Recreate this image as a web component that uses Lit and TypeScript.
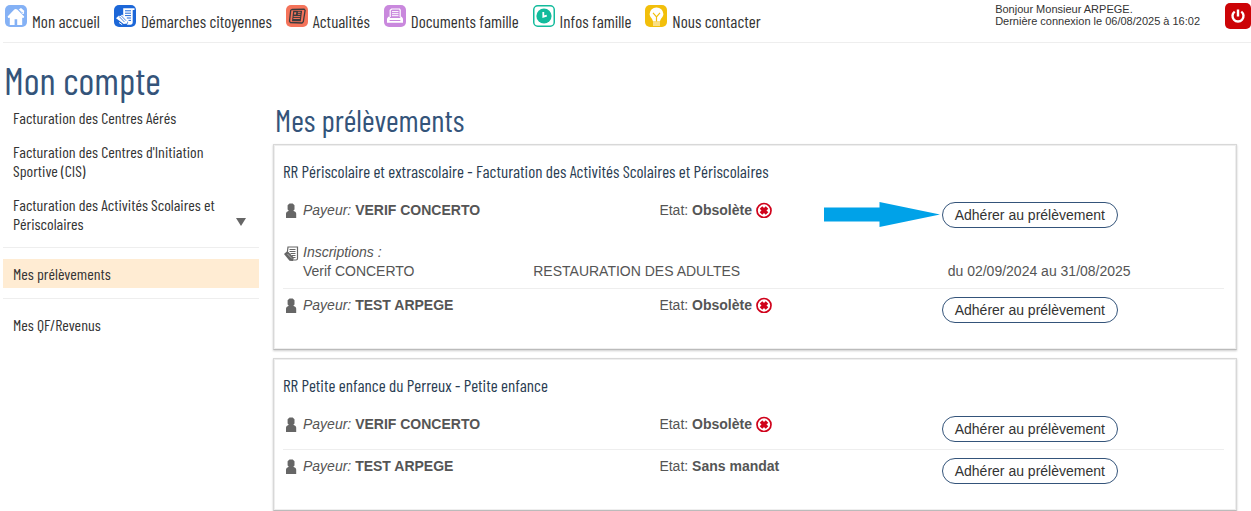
import { LitElement, html, css, svg, nothing, type TemplateResult } from "lit";
import { customElement, property } from "lit/decorators.js";

interface Payer {
  name: string;
  state: string;
  obsolete?: boolean;
  highlighted?: boolean;
  enrolments?: { who: string; activity: string; period: string }[];
}
interface Account {
  title: string;
  payers: Payer[];
}

const condensed = css`"Barlow Condensed", "Liberation Sans Narrow", "Roboto Condensed", "Liberation Sans", sans-serif`;

const navIcons: Record<string, TemplateResult> = {
  home: svg`<rect width="22" height="22" rx="5" fill="#84b1f5"/>
    <path d="M2.600 11.600 9.300 4.600l1.300-.6 1.600.6 7 7-.7 1.300-1.300-.2V20h-5v-5.800H9.600V20H4.800v-7.300l-1.500.2z" fill="#fff"/>
    <path d="M13.700 4.600l2.300-1.700 3.200 2.800-.4 3.200-1.400.2z" fill="#fff"/>
    <path d="M14 4.600l1.700 2.300 2.400 1.100" fill="none" stroke="#84b1f5" stroke-width=".7"/>`,
  forms: svg`<rect width="22" height="22" rx="5" fill="#1c67d8"/>
    <path d="M9.200 3.200h11.300v1.900h-1.800v12.200c0 1.500-.8 2.400-2.200 2.400h-3.700l1.500-2.100-5.100-6.200z" fill="#fff"/>
    <path d="M11 5.800h6M11 8.200h6M11 10.600h6M12.800 13h4.200M14.500 15.400h2.500" stroke="#1c67d8" stroke-width="1"/>
    <path d="M2 13.200l2.600-2.500 1.800.3 1.700-1.600 5.500 6.100-.3 3-3.600.5z" fill="#fff"/>
    <path d="M5.200 11.500l5.300 5.600M7.200 10.700l4.800 5" stroke="#1c67d8" stroke-width=".8"/>
    <path d="M5 17.500l3.200 2.200" stroke="#fff" stroke-width="1"/>`,
  news: svg`<rect width="22" height="22" rx="5" fill="#f4735a"/>
    <path d="M6.200 4.500l11.900-.4 1 1.300-1.800 11.400-1.300 1.200-11.600-.5-.9-1.400 1.200-10.800z" fill="none" stroke="#3b3b3d" stroke-width="1.300"/>
    <path d="M7.200 5.700h8.900l-1.300 10.600H6z" fill="#3b3b3d"/>
    <path d="M11.900 7.300h2.700M11.800 9.300h2.600M7.600 11.600h6.600M7.300 13.500h6.600" stroke="#f4735a" stroke-width="1"/>
    <path d="M8.300 7.200h2l-.3 2.400H8z" fill="#f4735a"/>`,
  printer: svg`<rect width="22" height="22" rx="5" fill="#c988dd"/>
    <path d="M6.200 12V5.200L7.600 4h8l.6 1.200V12" fill="none" stroke="#fff" stroke-width="1.200"/>
    <path d="M8 6.600h6.500M8 8.700h6.500M8 10.700h6.500" stroke="#fff" stroke-width="1"/>
    <path d="M4.200 11.800h1.400l.6 1.200h9.800l.6-1.200h1.200l1.200 2v4H3v-4z" fill="#fff"/>
    <path d="M5.600 15.500h10.800" stroke="#c988dd" stroke-width="1"/>`,
  clock: svg`<rect x=".75" y=".75" width="20.500" height="20.500" rx="4" fill="#fff" stroke="#12bb9c" stroke-width="1.500"/>
    <circle cx="11" cy="11" r="7.600" fill="#12bb9c"/>
    <path d="M10.300 7v4.700l3.500-1" fill="none" stroke="#fff" stroke-width="1.800"/>`,
  bulb: svg`<rect width="22" height="22" rx="5" fill="#f2bf0b"/>
    <path d="M11.500 2.500a6.700 6.700 0 0 0-6.900 6.400c0 3 3 4.400 3.400 7.600h7c.4-3.200 3.400-4.600 3.400-7.600a6.700 6.700 0 0 0-6.900-6.400z" fill="#fff"/>
    <path d="M8 7.800l3.500 4 3.500-4M11.500 11.800v4.700" fill="none" stroke="#f2bf0b" stroke-width="1.200"/>
    <path d="M8 18h7M8 20h7" stroke="#fff" stroke-width="1.100"/>`,
};

const navItems = [
  ["home", "Mon accueil"],
  ["forms", "Démarches citoyennes"],
  ["news", "Actualités"],
  ["printer", "Documents famille"],
  ["clock", "Infos famille"],
  ["bulb", "Nous contacter"],
];

const accounts: Account[] = [
  {
    title: "RR Périscolaire et extrascolaire - Facturation des Activités Scolaires et Périscolaires",
    payers: [
      {
        name: "VERIF CONCERTO",
        state: "Obsolète",
        obsolete: true,
        highlighted: true,
        enrolments: [
          { who: "Verif CONCERTO", activity: "RESTAURATION DES ADULTES", period: "du 02/09/2024 au 31/08/2025" },
        ],
      },
      { name: "TEST ARPEGE", state: "Obsolète", obsolete: true },
    ],
  },
  {
    title: "RR Petite enfance du Perreux - Petite enfance",
    payers: [
      { name: "VERIF CONCERTO", state: "Obsolète", obsolete: true },
      { name: "TEST ARPEGE", state: "Sans mandat" },
    ],
  },
];

@customElement("top-bar")
class TopBar extends LitElement {
  static styles = css`
    :host { display: block; }
    .bar {
      display: flex;
      justify-content: space-between;
      height: 42px;
      margin-left: 3px;
      border-bottom: 1px solid #eee;
    }
    .nav { display: flex; gap: 14px; padding: 5px 0 0 2px; }
    .link {
      display: flex;
      gap: 5px;
      color: #333;
      text-decoration: none;
      font: 17px/32px ${condensed};
      white-space: nowrap;
    }
    .icon { flex: none; width: 22px; height: 22px; }
    .session { display: flex; gap: 25px; padding-top: 3px; }
    .who { margin: 0; font: 11px/12px "Liberation Sans", Arial, sans-serif; color: #333; white-space: nowrap; }
    .power {
      display: block;
      width: 26px;
      height: 26px;
      padding: 0;
      border: 0;
      border-radius: 5px;
      background: #cc0407;
    }
    .power svg { display: block; }
  `;
  render() {
    return html`
      <header class="bar">
        <nav class="nav">
          ${navItems.map(
            ([icon, label]) => html`<a class="link" href="#"
              ><svg class="icon" viewBox="0 0 22 22" aria-hidden="true">${navIcons[icon]}</svg>${label}</a
            >`
          )}
        </nav>
        <div class="session">
          <p class="who">Bonjour Monsieur ARPEGE.<br />Dernière connexion le 06/08/2025 à 16:02</p>
          <button class="power" aria-label="Déconnexion">
            <svg width="26" height="26" viewBox="0 0 26 26" fill="none" stroke="#fff" stroke-width="2.400">
              <path d="M9.700 8.600a5.500 5.500 0 1 0 6.600 0M13 6.500v7" />
            </svg>
          </button>
        </div>
      </header>
    `;
  }
}

@customElement("account-menu")
class AccountMenu extends LitElement {
  static styles = css`
    :host { display: block; }
    .menu { display: flex; flex-direction: column; gap: 5px; font: 16px/19px ${condensed}; }
    .item { display: flex; align-items: flex-end; padding: 5px 10px; color: #333; text-decoration: none; }
    .label { flex: 1; }
    .caret { flex: none; width: 10px; height: 8px; margin: 0 3px 7px 0; }
    .current { margin-bottom: 1px; background: #ffecd3; }
    .rule { width: 100%; margin: 4px 0 6px; border: 0; border-top: 1px solid #eee; }
  `;
  render() {
    return html`
      <nav class="menu">
        <a class="item" href="#">Facturation des Centres Aérés</a>
        <a class="item" href="#">Facturation des Centres d'Initiation<br />Sportive (CIS)</a>
        <a class="item" href="#">
          <span class="label">Facturation des Activités Scolaires et<br />Périscolaires</span>
          <svg class="caret" viewBox="0 0 10 8"><path d="M0 0h10L5 8z" fill="#666" /></svg>
        </a>
        <hr class="rule" />
        <a class="item current" href="#" aria-current="page">Mes prélèvements</a>
        <hr class="rule" />
        <a class="item" href="#">Mes QF/Revenus</a>
      </nav>
    `;
  }
}

@customElement("account-card")
class AccountCard extends LitElement {
  @property({ attribute: false }) account!: Account;

  static styles = css`
    :host { display: block; }
    .card {
      padding: 16px 12px 19px 9px;
      border: 1px solid #d8d8d8;
      border-bottom-color: #bbb;
      box-shadow: inset 0 0 0 1px #eee, 0 1px 2px rgba(0, 0, 0, 0.2);
      color: #555;
      font: 14px/16px "Liberation Sans", Arial, sans-serif;
    }
    .title { margin: 0 0 13px; color: #2a3d52; font: 17px/20px ${condensed}; }
    .payer + .payer { border-top: 1px solid #eee; }
    .row { display: grid; grid-template-columns: 40% 30% 30%; padding: 8px 0 7px; }
    .name, .state { display: flex; gap: 4px; }
    .glyph { flex: none; width: 16px; height: 16px; }
    .lead { font-style: italic; }
    .value { font-weight: bold; }
    .action { position: relative; }
    .arrow { position: absolute; right: 100%; top: 0; width: 116px; height: 25px; margin-right: 2px; }
    .join {
      height: 26px;
      padding: 0 12px;
      border: 1px solid #34547a;
      border-radius: 13px;
      background: #fff;
      color: #333;
      font: 14px/24px "Liberation Sans", Arial, sans-serif;
      white-space: nowrap;
    }
    .enrolments { display: flex; gap: 4px; padding: 8px 0 7px; line-height: 19px; }
    .detail { flex: 1; }
    .line { display: grid; grid-template-columns: 25% 45% 30%; }
    .sheet { margin-top: 3px; }
  `;
  render() {
    return html`
      <section class="card">
        <h3 class="title">${this.account.title}</h3>
        ${this.account.payers.map((p) => this.payer(p))}
      </section>
    `;
  }
  private payer(p: Payer) {
    return html`
      <div class="payer">
        <div class="row">
          <div class="name">
            <svg class="glyph" viewBox="0 0 16 16" fill="#666">
              <path d="M6.500 1.600h3.200l1.800 1.600v4.200l-1.200 1.400 2.300 1.200.6 1.400V16H3v-4.600l.6-1.400 2.200-1.200-1.200-1.400V3.200z" />
            </svg>
            <span><span class="lead">Payeur:</span> <span class="value">${p.name}</span></span>
          </div>
          <div class="state">
            <span>Etat: <span class="value">${p.state}</span></span>
            ${p.obsolete
              ? html`<svg class="glyph" viewBox="0 0 16 16">
                  <circle cx="8" cy="8.500" r="7" fill="#fff" stroke="#d0021b" stroke-width="1.700" />
                  <path d="M5 5.500l6 6M11 5.500l-6 6" stroke="#d0021b" stroke-width="3.600" />
                </svg>`
              : nothing}
          </div>
          <div class="action">
            ${p.highlighted
              ? html`<svg class="arrow" viewBox="0 0 116 25"><path d="M0 5.500h55.500V0L116 12.500 55.500 25v-5.500H0z" fill="#00a2e8" /></svg>`
              : nothing}
            <button class="join">Adhérer au prélèvement</button>
          </div>
        </div>
        ${p.enrolments
          ? html`<div class="enrolments">
              <svg class="glyph sheet" viewBox="0 0 16 16">
                <path d="M5 1h9.500v11.500c0 1-.6 1.500-1.500 1.500H8L4 9z" fill="#fff" stroke="#666" stroke-width="1.200" />
                <path d="M6.500 3.500h6M6.500 5.500h6M7.500 7.500h5M9 9.500h3.500M10 11.500h2.500" stroke="#666" />
                <path d="M1 8l2.500-2.200 2 .2 5.300 5.500-.8 3.500-3.500-.2z" fill="#666" />
                <path d="M4.500 8l4.500 4.600" stroke="#ccc" stroke-width=".7" />
              </svg>
              <div class="detail">
                <div class="lead">Inscriptions :</div>
                ${p.enrolments.map(
                  (e) => html`<div class="line"><span>${e.who}</span><span>${e.activity}</span><span>${e.period}</span></div>`
                )}
              </div>
            </div>`
          : nothing}
      </div>
    `;
  }
}

@customElement("app-root")
class AppRoot extends LitElement {
  static styles = css`
    :host { display: block; background: #fff; }
    .heading { margin: 0; padding: 15px 4px 1px; color: #34547a; font: 38px/44px ${condensed}; }
    .columns { display: grid; grid-template-columns: 256px 1fr; gap: 14px; padding: 0 14px 0 3px; }
    .subheading { margin: 0; padding: 0 2px 8px; color: #34547a; font: 31px/33px ${condensed}; }
    .cards { display: flex; flex-direction: column; gap: 8px; }
  `;
  render() {
    return html`
      <top-bar></top-bar>
      <h1 class="heading">Mon compte</h1>
      <div class="columns">
        <account-menu></account-menu>
        <main>
          <h2 class="subheading">Mes prélèvements</h2>
          <div class="cards">${accounts.map((a) => html`<account-card .account=${a}></account-card>`)}</div>
        </main>
      </div>
    `;
  }
}
